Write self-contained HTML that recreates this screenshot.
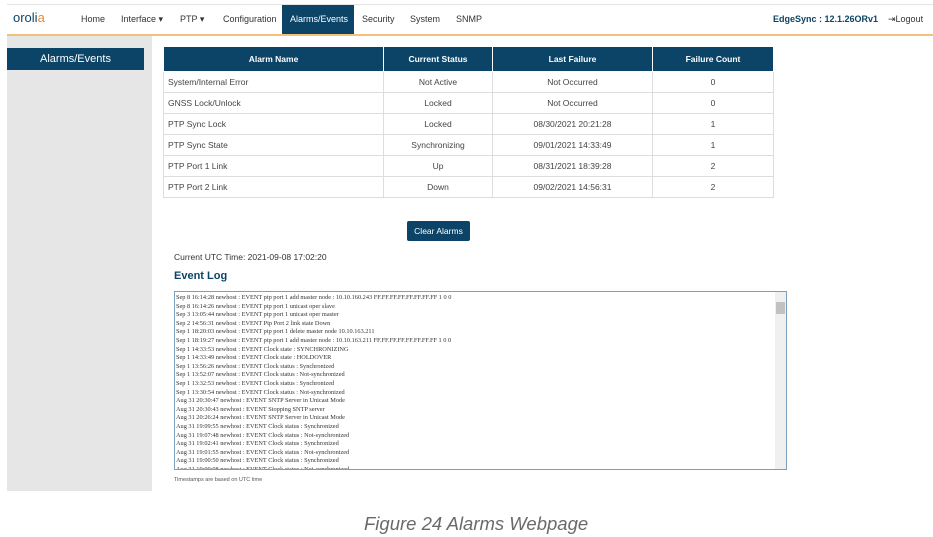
<!DOCTYPE html>
<html><head><style>
body{margin:0;width:933px;height:537px;background:#fff;font-family:"Liberation Sans",sans-serif;position:relative;overflow:hidden;color:#333}
.a{position:absolute}
.nav{left:7px;top:4px;width:926px;height:29px;border-top:1px solid #e4e4e4;border-bottom:2px solid #f3c17a}
.nav span{position:absolute;top:9px;font-size:9px;color:#333}
.act{position:absolute;left:275px;top:0;width:72px;height:29px;background:#0b4466}
table{border-collapse:collapse;font-size:8.5px;table-layout:fixed}
td{border:1px solid #ddd;height:20px;padding:0 4px;text-align:center;color:#444}
td:first-child{text-align:left}
th{background:#0b4466;color:#fff;height:22px;font-size:8.5px;border:1px solid #fff}
.log{left:174px;top:291px;width:611px;height:177px;border:1px solid #7aa0be;overflow:hidden;font-family:"Liberation Serif",serif;font-size:6.3px;line-height:8.6px;color:#333}
.log div{padding-left:1px;white-space:nowrap}
</style></head><body>
<div class="a nav">
<div class="act"></div>
<span style="left:6px;top:5px;font-size:13px;color:#0b4466">oroli<span style="position:static;color:#e88b2c;font-size:13px">a</span></span>
<span style="left:74px">Home</span>
<span style="left:114px">Interface ▾</span>
<span style="left:173px">PTP ▾</span>
<span style="left:216px">Configuration</span>
<span style="left:283px;color:#fff">Alarms/Events</span>
<span style="left:355px">Security</span>
<span style="left:403px">System</span>
<span style="left:449px">SNMP</span>
<span style="left:766px;font-weight:bold;color:#0b4466">EdgeSync : 12.1.26ORv1</span>
<span style="left:881px">⇥Logout</span>
</div>
<div class="a" style="left:7px;top:36px;width:145px;height:455px;background:#e6e6e6"></div>
<div class="a" style="left:7px;top:48px;width:137px;height:22px;background:#0b4466;color:#fff;font-size:11px;text-align:center;line-height:22px">Alarms/Events</div>
<table class="a" style="left:163px;top:46px;width:611px">
<tr><th style="width:217px">Alarm Name</th><th style="width:106px">Current Status</th><th style="width:157px">Last Failure</th><th>Failure Count</th></tr>
<tr><td>System/Internal Error</td><td>Not Active</td><td>Not Occurred</td><td>0</td></tr>
<tr><td>GNSS Lock/Unlock</td><td>Locked</td><td>Not Occurred</td><td>0</td></tr>
<tr><td>PTP Sync Lock</td><td>Locked</td><td>08/30/2021 20:21:28</td><td>1</td></tr>
<tr><td>PTP Sync State</td><td>Synchronizing</td><td>09/01/2021 14:33:49</td><td>1</td></tr>
<tr><td>PTP Port 1 Link</td><td>Up</td><td>08/31/2021 18:39:28</td><td>2</td></tr>
<tr><td>PTP Port 2 Link</td><td>Down</td><td>09/02/2021 14:56:31</td><td>2</td></tr>
</table>
<div class="a" style="left:407px;top:221px;width:63px;height:20px;background:#0b4466;border-radius:2px;color:#fff;font-size:8.5px;text-align:center;line-height:20px">Clear Alarms</div>
<div class="a" style="left:174px;top:252px;font-size:8.5px">Current UTC Time: 2021-09-08 17:02:20</div>
<div class="a" style="left:174px;top:270px;font-size:11px;font-weight:bold;color:#0b4466">Event Log</div>
<div class="a log">
<div style="height:2px"></div>
<div>Sep 8 16:14:28 newhost : EVENT ptp port 1 add master node : 10.10.160.243 FF.FF.FF.FF.FF.FF.FF.FF 1 0 0</div>
<div>Sep 8 16:14:26 newhost : EVENT ptp port 1 unicast oper slave</div>
<div>Sep 3 13:05:44 newhost : EVENT ptp port 1 unicast oper master</div>
<div>Sep 2 14:56:31 newhost : EVENT Ptp Port 2 link state Down</div>
<div>Sep 1 18:20:03 newhost : EVENT ptp port 1 delete master node 10.10.163.211</div>
<div>Sep 1 18:19:27 newhost : EVENT ptp port 1 add master node : 10.10.163.211 FF.FF.FF.FF.FF.FF.FF.FF 1 0 0</div>
<div>Sep 1 14:33:53 newhost : EVENT Clock state : SYNCHRONIZING</div>
<div>Sep 1 14:33:49 newhost : EVENT Clock state : HOLDOVER</div>
<div>Sep 1 13:56:26 newhost : EVENT Clock status : Synchronized</div>
<div>Sep 1 13:52:07 newhost : EVENT Clock status : Not-synchronized</div>
<div>Sep 1 13:32:53 newhost : EVENT Clock status : Synchronized</div>
<div>Sep 1 13:30:54 newhost : EVENT Clock status : Not-synchronized</div>
<div>Aug 31 20:30:47 newhost : EVENT SNTP Server in Unicast Mode</div>
<div>Aug 31 20:30:43 newhost : EVENT Stopping SNTP server</div>
<div>Aug 31 20:26:24 newhost : EVENT SNTP Server in Unicast Mode</div>
<div>Aug 31 19:09:55 newhost : EVENT Clock status : Synchronized</div>
<div>Aug 31 19:07:48 newhost : EVENT Clock status : Not-synchronized</div>
<div>Aug 31 19:02:41 newhost : EVENT Clock status : Synchronized</div>
<div>Aug 31 19:01:55 newhost : EVENT Clock status : Not-synchronized</div>
<div>Aug 31 19:00:50 newhost : EVENT Clock status : Synchronized</div>
<div>Aug 31 19:00:08 newhost : EVENT Clock status : Not-synchronized</div>
<div class="a" style="right:0;top:0;width:10px;height:177px;background:#f0f0f0"><div class="a" style="left:1px;top:10px;width:8px;height:12px;background:#c1c1c1"></div></div>
</div>
<div class="a" style="left:174px;top:477px;font-size:5.5px;color:#555">Timestamps are based on UTC time</div>
<div class="a" style="left:364px;top:513px;font-size:18.5px;font-style:italic;color:#6a6a6a">Figure 24 Alarms Webpage</div>
</body></html>
